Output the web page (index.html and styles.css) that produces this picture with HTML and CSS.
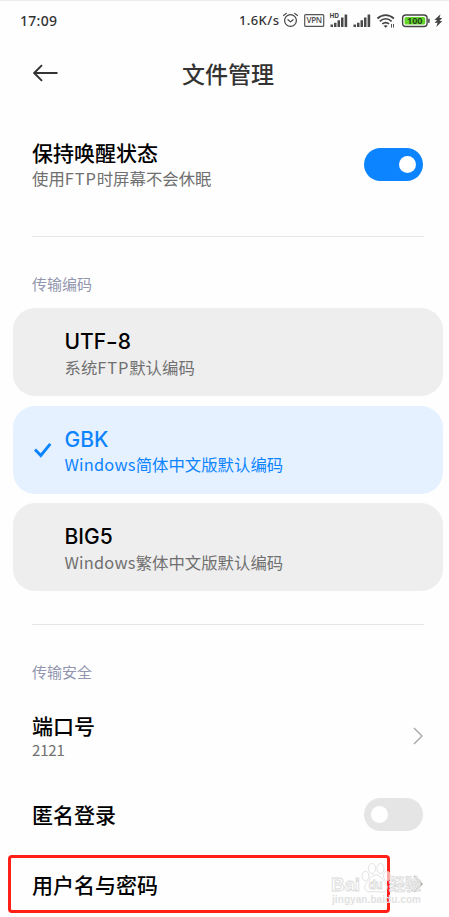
FILE: index.html
```html
<!DOCTYPE html>
<html lang="zh-CN">
<head>
    <meta charset="UTF-8">
    <title>文件管理</title>
    <link rel="stylesheet" href="styles.css">
</head>
<body>
    <div class="status-bar">
        <span class="time">17:09</span>
        <span class="speed">1.6K/s</span>
        <svg class="status-icons" width="165" height="20" viewBox="0 0 165 20">
            <!-- alarm -->
            <g fill="none" stroke="#444" stroke-width="1.2" stroke-linecap="round" stroke-linejoin="round">
                <circle cx="9.500" cy="10.5" r="5.9"/>
                <path d="M2.600 5.5 5.300 3.4M16.400 5.5 13.700 3.4M7 9.7l2.5 2.2 2.5-2.2"/>
            </g>
            <!-- vpn -->
            <rect x="23.700" y="4.6" width="19" height="11.8" rx="1" fill="none" stroke="#555" stroke-width="1.2"/>
            <text x="25.500" y="13.4" class="vpn" textLength="15.5">VPN</text>
            <!-- signals -->
            <text x="48.500" y="7.6" class="hd" textLength="9.5">HD</text>
            <g fill="#4a4a4a">
                <path d="M49.500 14.5h2.500v2.5h-2.500zM53 12.8h2.500V17h-2.500zM56.500 10.2h2.500V17h-2.500zM60 7.500h2.500V17h-2.500zM63.600 4.500h2.600V17h-2.600z"/>
                <path d="M72.500 14.500h2.500v2.500h-2.500zM76 12.800h2.500V17h-2.500zM79.500 10.200h2.500V17h-2.500zM83 7.500h2.500V17h-2.500zM86.600 4.500h2.600V17h-2.600z"/>
            </g>
            <!-- wifi -->
            <g fill="none" stroke="#444" stroke-width="1.7">
                <path d="M96.400 8.5c5-4.6 11.500-4.600 16.500 0M98.800 11.300c3.600-3.200 8.200-3.200 11.800 0M101.200 13.900c2.200-1.700 4.700-1.700 6.900 0"/>
            </g>
            <path d="M102.500 15.800q2.200-1.300 4.300 0l-2.100 2z" fill="#444"/>
            <path d="M110.500 14v3.600M112.500 14v3.600" stroke="#555"/>
            <!-- battery -->
            <rect x="121.600" y="5" width="24.500" height="11.500" rx="3.200" fill="none" stroke="#444" stroke-width="1.400"/>
            <rect x="123.500" y="6.900" width="20.700" height="7.700" rx="1.500" fill="#65d62c"/>
            <path d="M147.900 8.800v4" stroke="#444" stroke-width="1.500"/>
            <text x="126" y="13.900" class="battery-level" textLength="15.500">100</text>
            <path d="M159.500 4.200 153.300 10h3l-2.800 2.800h3l-1.200 4.200 6-6h-2.800l2.700-3h-2.700z" fill="#444"/>
        </svg>
    </div>

    <div class="header">
        <svg class="back" width="26" height="18" viewBox="0 0 26 18">
            <path d="M24.500 9H1.500M9 1.200 1.200 9 9 16.800" fill="none" stroke="#333" stroke-width="1.900"/>
        </svg>
        <h1>文件管理</h1>
    </div>

    <div class="row row-awake">
        <div class="row-text">
            <div class="title">保持唤醒状态</div>
            <div class="sub">使用<span class="ftp">FTP</span>时屏幕不会休眠</div>
        </div>
        <div class="switch on"></div>
    </div>

    <div class="divider"></div>
    <div class="section-label">传输编码</div>

    <div class="options">
        <div class="option">
            <div class="title latin">UTF<span class="dash">-</span>8</div>
            <div class="sub">系统<span class="ftp">FTP</span>默认编码</div>
        </div>
        <div class="option selected">
            <svg class="check" width="20" height="16" viewBox="0 0 20 16">
                <path d="M2 7.500l5.800 6L17.300 1.800" fill="none" stroke="#0d84ff" stroke-width="2.900"/>
            </svg>
            <div class="title latin">GBK</div>
            <div class="sub"><span class="win">Windows</span>简体中文版默认编码</div>
        </div>
        <div class="option">
            <div class="title latin">BIG5</div>
            <div class="sub"><span class="win">Windows</span>繁体中文版默认编码</div>
        </div>
    </div>

    <div class="divider"></div>
    <div class="section-label">传输安全</div>

    <div class="row row-port">
        <div class="row-text">
            <div class="title">端口号</div>
            <div class="sub port">2121</div>
        </div>
        <svg class="arrow" width="10" height="18" viewBox="0 0 10 18">
            <path d="M1 1l8 8-8 8" fill="none" stroke="#aaa" stroke-width="1.500"/>
        </svg>
    </div>
    <div class="row row-anon">
        <div class="title">匿名登录</div>
        <div class="switch"></div>
    </div>
    <div class="row row-user">
        <div class="title">用户名与密码</div>
        <svg class="arrow" width="10" height="18" viewBox="0 0 10 18">
            <path d="M1 1l8 8-8 8" fill="none" stroke="#aaa" stroke-width="1.500"/>
        </svg>
        <div class="highlight"></div>
        <svg class="watermark" width="100" height="50" viewBox="0 0 100 50">
            <g fill="#fff" fill-opacity=".6" stroke="#dadada" stroke-width=".8">
                <ellipse cx="35.500" cy="16" rx="3.400" ry="4.500"/>
                <ellipse cx="42" cy="8.500" rx="3.500" ry="5"/>
                <ellipse cx="50.500" cy="8.500" rx="3.500" ry="5"/>
                <ellipse cx="57" cy="16" rx="3.400" ry="4.500"/>
                <path d="M46 15c5 0 6 5 9.500 8 3.500 4 1.500 9-3.500 9-4 0-8-1-12 0-5 0-7-5-3.500-9 3.500-3 4.500-8 9.500-8z"/>
                <text x="1" y="31" class="wm-name" textLength="29">Bai</text>
                <text x="38.500" y="29" class="wm-du" textLength="14">du</text>
                <text x="59" y="29.500" class="wm-cn" textLength="32">经验</text>
            </g>
            <text x="2" y="42.500" class="wm-url" textLength="89">jingyan.baidu.com</text>
        </svg>
    </div>
</body>
</html>
```
FILE: styles.css
```css
* {
    box-sizing: border-box;
}

body {
    margin: 0;
    width: 449px;
    height: 917px;
    overflow: hidden;
    background: #fefefe;
    border-top: 1px solid #ececec;
    color: #000;
    font-family: "Noto Sans CJK SC", sans-serif;
}

.status-bar {
    display: flex;
    align-items: center;
    height: 38px;
    padding-left: 20px;
    font-family: "Noto Sans", sans-serif;
    font-weight: 500;
    color: #333;
}

.time {
    flex: none;
    width: 219px;
    font-size: 14px;
    letter-spacing: 0.3px;
}

.speed {
    flex: none;
    width: 42px;
    font-size: 13px;
    letter-spacing: 0.4px;
    white-space: nowrap;
}

.status-icons {
    flex: none;
}

.vpn {
    font: 600 8px "Noto Sans", sans-serif;
    fill: #555;
}

.hd {
    font: 700 6.5px "Noto Sans", sans-serif;
    fill: #444;
}

.battery-level {
    font: 700 9px "Noto Sans", sans-serif;
    fill: #26461a;
}

.header {
    display: grid;
    grid-template-columns: 149px 1fr;
    align-items: center;
    height: 68px;
    padding-left: 33px;
}

h1 {
    margin: 0;
    font-size: 23px;
    font-weight: 500;
    line-height: 34px;
    color: #333;
}

.row {
    display: flex;
    align-items: center;
    justify-content: space-between;
    padding: 0 26px 0 32px;
}

.row-awake {
    height: 111px;
    padding-top: 3px;
}

.title {
    font-size: 21px;
    font-weight: 500;
    line-height: 28px;
}

.latin {
    font-family: Inter, sans-serif;
}

.dash {
    display: inline-block;
    margin: 0 1px;
    transform: scaleX(1.25);
}

.sub {
    font-size: 16.4px;
    line-height: 24px;
    color: #707070;
    white-space: nowrap;
}

.ftp {
    letter-spacing: 0.9px;
}

.port {
    font-size: 15px;
    line-height: 22px;
    letter-spacing: -0.2px;
}

.win {
    letter-spacing: 0.2px;
}

.switch {
    width: 59px;
    height: 33px;
    padding: 8px 7px;
    border-radius: 17px;
    background: #e5e5e5;
}

.switch::before {
    content: "";
    display: block;
    width: 17px;
    height: 17px;
    border-radius: 50%;
    background: #fff;
}

.switch.on {
    background: #0d84ff;
}

.switch.on::before {
    margin-left: auto;
}

.divider {
    height: 1px;
    margin: 18px 25px 0 32px;
    background: #e5e5e5;
}

.section-label {
    margin: 35px 0 0 32px;
    height: 25px;
    font-size: 15px;
    line-height: 24px;
    color: #9295ae;
}

.options {
    display: grid;
    gap: 9.5px;
    margin: 11px 6px 33px 13px;
}

.option {
    position: relative;
    height: 88px;
    padding: 20px 0 0 51.5px;
    border-radius: 22px;
    background: #eee;
}

.option .sub {
    margin-top: -1.5px;
}

.option.selected {
    background: #e5f1ff;
}

.selected .title,
.selected .sub {
    color: #0d84ff;
}

.check {
    position: absolute;
    left: 20px;
    top: 36px;
}

.options + .divider {
    margin-top: 0;
}

.row-port {
    height: 101px;
}

.row-anon {
    height: 56px;
}

.row-user {
    position: relative;
    height: 84px;
}

.highlight {
    position: absolute;
    left: 8px;
    top: 13px;
    width: 382px;
    height: 58px;
    border: 3px solid #ff1f16;
    border-radius: 4px;
}

.watermark {
    position: absolute;
    left: 330px;
    top: 18px;
}

.wm-name {
    font: 700 19px "Liberation Sans", sans-serif;
}

.wm-du {
    font: 700 12px "Liberation Sans", sans-serif;
}

.wm-cn {
    font: 700 16px "Noto Sans CJK SC", sans-serif;
}

.wm-url {
    font: 700 10px "Liberation Sans", sans-serif;
    fill: #e2e2e2;
}
```
